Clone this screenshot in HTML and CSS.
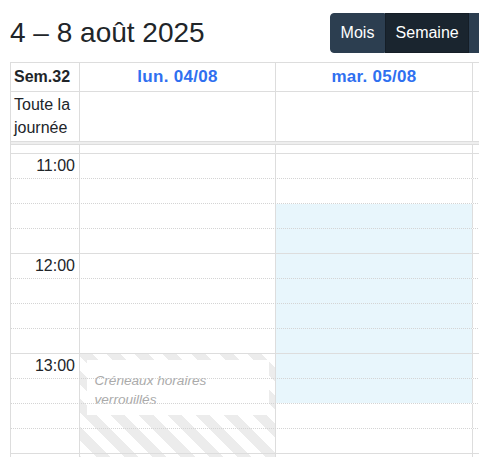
FILE: index.html
```html
<!DOCTYPE html>
<html lang="fr">
<head>
<meta charset="utf-8">
<title>Calendrier</title>
<link rel="stylesheet" href="styles.css">
</head>
<body>
<div class="page">
  <div class="toolbar">
    <h2 class="title">4 – 8 août 2025</h2>
    <div class="btn-group">
      <button class="btn first">Mois</button>
      <button class="btn active">Semaine</button>
      <button class="btn more" aria-label="Jour"></button>
    </div>
  </div>

  <div class="cal">
    <div class="hrow head">
      <div class="cell axis-h">Sem.32</div>
      <div class="cell day-h">lun. 04/08</div>
      <div class="cell day-h">mar. 05/08</div>
      <div class="cell day-h"></div>
    </div>
    <div class="hrow allday">
      <div class="cell axis-ad">Toute la journée</div>
      <div class="cell"></div>
      <div class="cell"></div>
      <div class="cell"></div>
    </div>
    <div class="divider"></div>

    <div class="tg">
      <div class="row partial"><div class="cell"></div><div class="cell"></div><div class="cell"></div><div class="cell"></div></div>
      <div class="row hour"><div class="cell ax">11:00</div><div class="cell"></div><div class="cell"></div><div class="cell"></div></div>
      <div class="row minor"><div class="cell ax"></div><div class="cell"></div><div class="cell"></div><div class="cell"></div></div>
      <div class="row minor"><div class="cell ax"></div><div class="cell"></div><div class="cell"></div><div class="cell"></div></div>
      <div class="row minor"><div class="cell ax"></div><div class="cell"></div><div class="cell"></div><div class="cell"></div></div>
      <div class="row hour"><div class="cell ax">12:00</div><div class="cell"></div><div class="cell"></div><div class="cell"></div></div>
      <div class="row minor"><div class="cell ax"></div><div class="cell"></div><div class="cell"></div><div class="cell"></div></div>
      <div class="row minor"><div class="cell ax"></div><div class="cell"></div><div class="cell"></div><div class="cell"></div></div>
      <div class="row minor"><div class="cell ax"></div><div class="cell"></div><div class="cell"></div><div class="cell"></div></div>
      <div class="row hour"><div class="cell ax">13:00</div><div class="cell"></div><div class="cell"></div><div class="cell"></div></div>
      <div class="row minor"><div class="cell ax"></div><div class="cell"></div><div class="cell"></div><div class="cell"></div></div>
      <div class="row minor"><div class="cell ax"></div><div class="cell"></div><div class="cell"></div><div class="cell"></div></div>
      <div class="row minor"><div class="cell ax"></div><div class="cell"></div><div class="cell"></div><div class="cell"></div></div>
      <div class="row hour"><div class="cell ax"></div><div class="cell"></div><div class="cell"></div><div class="cell"></div></div>

      <div class="ev highlight"></div>
      <div class="ev locked">
        <div class="lock-label">Créneaux horaires verrouillés</div>
      </div>
    </div>
  </div>
</div>
</body>
</html>
```

FILE: styles.css
```css
html, body {
  margin: 0;
  padding: 0;
  overflow: hidden;
  background: #fff;
}

body {
  width: 479px;
  height: 457px;
  font-family: "Liberation Sans", Arial, Helvetica, sans-serif;
  font-size: 16px;
  color: #212529;
}

.page {
  width: 760px;
  padding: 13px 0 0 10px;
}

.toolbar {
  display: grid;
  grid-template-columns: 320px max-content;
  align-items: center;
  height: 40px;
  margin-bottom: 9px;
}

.title {
  margin: 0;
  font-size: 28px;
  font-weight: 400;
  line-height: 40px;
  white-space: nowrap;
}

.btn-group {
  display: flex;
}

.btn {
  font-family: inherit;
  font-size: 16px;
  line-height: 24px;
  height: 40px;
  padding: 7px 9.6px;
  color: #fff;
  background: #2c3e50;
  border: 1px solid #2c3e50;
  border-radius: 0;
  margin: 0;
}

.btn.first {
  border-radius: 4px 0 0 4px;
}

.btn.active {
  background: #1a252f;
  border-color: #151e27;
}

.btn.more {
  width: 54px;
}

.cal {
  border-left: 1px solid #ddd;
  border-top: 1px solid #ddd;
}

.hrow,
.row {
  display: grid;
  grid-template-columns: 69px 196px 197px 196px;
}

.cell {
  box-sizing: border-box;
  border-right: 1px solid #ddd;
}

.hrow {
  border-bottom: 1px solid #ddd;
}

.head .cell {
  padding: 2px 4px;
  line-height: 24px;
  height: 28px;
  font-weight: 700;
  white-space: nowrap;
}

.axis-h {
  padding-left: 3px !important;
}

.day-h {
  text-align: center;
  color: #2f70f0;
  font-size: 17px;
  letter-spacing: 0.3px;
}

.allday .cell {
  height: 49px;
}

.axis-ad {
  padding: 1px 4px 0 3px;
  line-height: 23px;
}

.divider {
  height: 2px;
  background: #eeeeee;
  border-bottom: 1px solid #ddd;
}

.tg {
  position: relative;
  height: 320px;
  overflow: hidden;
}

.row {
  position: relative;
  z-index: 1;
  box-sizing: border-box;
  height: 25px;
}

.row.partial {
  height: 8px;
}

.row.hour {
  border-top: 1px solid #ddd;
}

.row.minor {
  border-top: 1px dotted #d4d4d4;
}

.ax {
  text-align: right;
  padding: 0 4px;
  line-height: 24px;
  white-space: nowrap;
}

.ev {
  position: absolute;
  z-index: 0;
}

.highlight {
  left: 265px;
  width: 196px;
  top: 59px;
  height: 199px;
  background: #e8f6fc;
}

.locked {
  left: 69px;
  width: 195px;
  top: 209px;
  height: 200px;
  box-sizing: border-box;
  padding: 6px 6px 0 7px;
  background: repeating-linear-gradient(45deg, #ececec 0 10px, #ffffff 10px 20px);
}

.lock-label {
  background: #fff;
  padding: 11px 8px 6px 7.5px;
  font-size: 13.6px;
  font-style: italic;
  line-height: 19px;
  color: #aaaaaa;
}
```
